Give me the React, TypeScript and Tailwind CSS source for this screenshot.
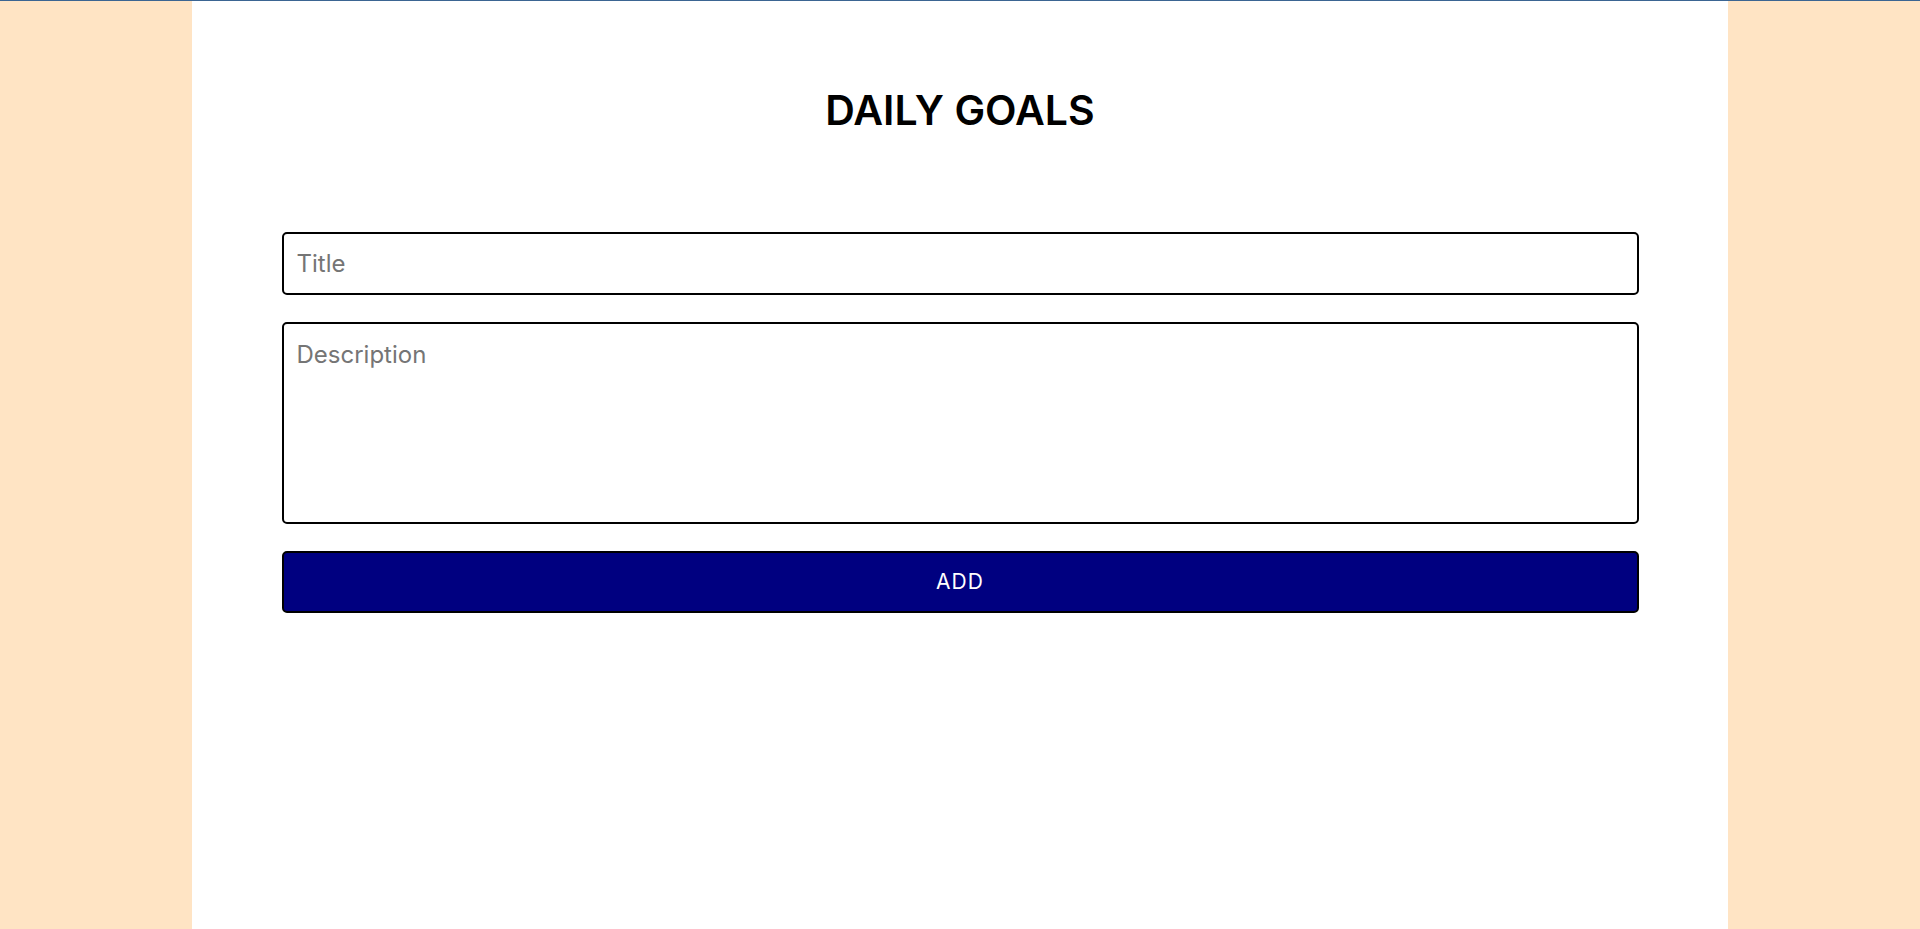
export default function App() {
  return (
    <div className="min-h-screen border-t border-[#3b6592] bg-[#ffe4c4] font-['Inter',sans-serif]">
      <main className="mx-auto flex min-h-[928px] w-[1536px] flex-col items-center bg-white">
        <h1 className="mt-[85px] text-[41px] leading-[48px] font-semibold text-black">
          DAILY GOALS
        </h1>
        <form
          className="mt-[98px] flex w-[1357px] flex-col gap-[27px]"
          onSubmit={(e) => e.preventDefault()}
        >
          <input
            type="text"
            placeholder="Title"
            className="h-[63px] rounded-[5px] border-2 border-black px-[13px] text-[24px] text-black outline-none placeholder:text-[#757575]"
          />
          <textarea
            placeholder="Description"
            className="h-[202px] resize-none rounded-[5px] border-2 border-black px-[13px] pt-[13px] text-[24px] text-black outline-none placeholder:text-[#757575]"
          />
          <button
            type="submit"
            className="h-[62px] rounded-[5px] border-2 border-black bg-[#000080] text-[21px] tracking-[1px] text-white"
          >
            ADD
          </button>
        </form>
      </main>
    </div>
  )
}
